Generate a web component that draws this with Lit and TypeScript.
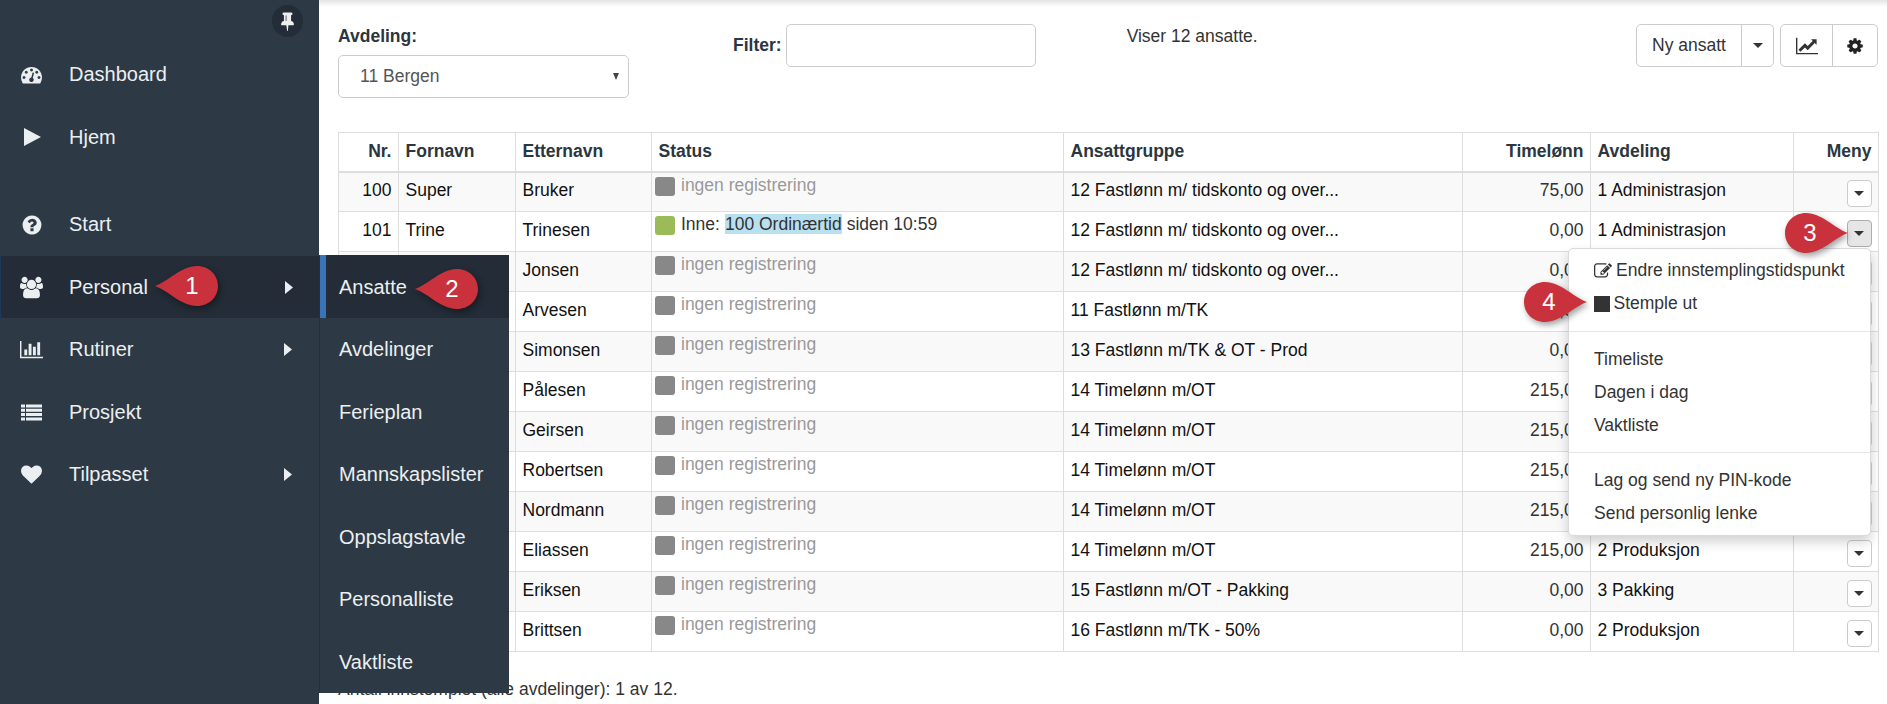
import { LitElement, html, css, svg } from "lit";
import { customElement } from "lit/decorators.js";

const icons: Record<string, [string, string]> = {
  dash: ["0 0 1792 1792", "M384 1152q0-53-37.5-90.5t-90.5-37.5-90.5 37.5-37.5 90.5 37.5 90.5 90.5 37.5 90.5-37.5 37.5-90.5zm192-448q0-53-37.5-90.5t-90.5-37.5-90.5 37.5-37.5 90.5 37.5 90.5 90.5 37.5 90.5-37.5 37.5-90.5zm428 481l101-382q6-26-7.5-48.5t-38.5-29.5-48 6.5-30 39.5l-101 382q-60 5-107 43.5t-63 98.5q-20 77 20 146t117 89 146-20 89-117q16-60-6-117t-72-91zm660-33q0-53-37.5-90.5t-90.5-37.5-90.5 37.5-37.5 90.5 37.5 90.5 90.5 37.5 90.5-37.5 37.5-90.5zm-640-640q0-53-37.5-90.5t-90.5-37.5-90.5 37.5-37.5 90.5 37.5 90.5 90.5 37.5 90.5-37.5 37.5-90.5zm448 192q0-53-37.5-90.5t-90.5-37.5-90.5 37.5-37.5 90.5 37.5 90.5 90.5 37.5 90.5-37.5 37.5-90.5zm320 448q0 261-141 483-19 29-54 29h-1402q-35 0-54-29-141-221-141-483 0-182 71-348t191-286 286-191 348-71 348 71 286 191 191 286 71 348z"],
  play: ["0 0 20 20", "M2 1 L19 10 L2 19 Z"],
  help: ["0 0 1792 1792", "M1024 1376v-192q0-14-9-23t-23-9h-192q-14 0-23 9t-9 23v192q0 14 9 23t23 9h192q14 0 23-9t9-23zm256-672q0-88-55.5-163t-138.5-116-170-41q-243 0-371 213-15 24 8 42l132 100q7 6 19 6 16 0 25-12 53-68 86-92 34-24 86-24 48 0 85.5 26t37.5 59q0 38-20 61t-68 45q-63 28-115.5 86.5t-52.5 125.5v36q0 14 9 23t23 9h192q14 0 23-9t9-23q0-19 21.5-49.5t54.5-49.5q32-18 49-28.5t46-35 44.5-48 28-60.5 12.5-81zm384 192q0 209-103 385.5t-279.5 279.5-385.5 103-385.5-103-279.5-279.5-103-385.5 103-385.5 279.5-279.5 385.5-103 385.5 103 279.5 279.5 103 385.5z"],
  users: ["0 0 1920 1792", "M593 896q-162 5-265 128h-134q-82 0-138-40.5t-56-118.5q0-353 124-353 6 0 43.5 21t97.5 42.5 119 21.5q67 0 133-23-5 37-5 66 0 139 81 256zm1071 637q0 120-73 189.5t-194 69.5h-874q-121 0-194-69.5t-73-189.5q0-53 3.5-103.5t14-109 26.5-108.5 43-97.5 62-81 85.5-53.5 111.5-20q10 0 43 21.5t73 48 107 48 135 21.5 135-21.5 107-48 73-48 43-21.5q61 0 111.5 20t85.5 53.5 62 81 43 97.5 26.5 108.5 14 109 3.5 103.5zm-1024-1277q0 106-75 181t-181 75-181-75-75-181 75-181 181-75 181 75 75 181zm704 384q0 159-112.5 271.5t-271.5 112.5-271.5-112.5-112.5-271.5 112.5-271.5 271.5-112.5 271.5 112.5 112.5 271.5zm576 225q0 78-56 118.5t-138 40.5h-134q-103-123-265-128 81-117 81-256 0-29-5-66 66 23 133 23 59 0 119-21.5t97.5-42.5 43.5-21q124 0 124 353zm-128-609q0 106-75 181t-181 75-181-75-75-181 75-181 181-75 181 75 75 181z"],
  bars: ["0 0 2048 1792", "M640 896v512h-256v-512h256zm384-512v1024h-256v-1024h256zm1024 1152v128h-2048v-1536h128v1408h1920zm-640-896v768h-256v-768h256zm384-384v1152h-256v-1152h256z"],
  list: ["0 0 21 16", "M0 0h4v3H0zM5 0h16v3H5zM0 4.3h4v3H0zM5 4.3h16v3H5zM0 8.6h4v3H0zM5 8.6h16v3H5zM0 13h4v3H0zM5 13h16v3H5z"],
  heart: ["0 0 1792 1792", "M896 1664q-26 0-44-18l-624-602q-10-8-27.5-26t-55.5-65.5-68-97.5-53.5-121-23.5-138q0-220 127-344t351-124q62 0 126.5 21.5t120 58 95.5 68.5 76 68q36-36 76-68t95.5-68.5 120-58 126.5-21.5q224 0 351 124t127 344q0 221-229 450l-623 600q-18 18-44 18z"],
  pin: ["0 0 1152 1792", "M480 864v-448q0-14-9-23t-23-9-23 9-9 23v448q0 14 9 23t23 9 23-9 9-23zm672 352q0 26-19 45t-45 19h-429l-51 483q-2 12-10.5 20.5t-20.5 8.5h-1q-27 0-32-27l-76-485h-404q-26 0-45-19t-19-45q0-123 78.5-221.5t177.5-98.5v-512q-52 0-90-38t-38-90 38-90 90-38h640q52 0 90 38t38 90-38 90-90 38v512q99 0 177.5 98.5t78.5 221.5z"],
  cog: ["0 0 1792 1792", "M1152 896q0-106-75-181t-181-75-181 75-75 181 75 181 181 75 181-75 75-181zm512-109v222q0 12-8 23t-20 13l-185 28q-19 54-39 91 35 50 107 138 10 12 10 25t-9 23q-27 37-99 108t-94 71q-12 0-26-9l-138-108q-44 23-91 38-16 136-29 186-7 28-36 28h-222q-14 0-24.5-8.5t-11.5-21.5l-28-184q-49-16-90-37l-141 107q-10 9-25 9-14 0-25-11-126-114-165-168-7-10-7-23 0-12 8-23 15-21 51-66.5t54-70.5q-27-50-41-99l-183-27q-13-2-21-12.5t-8-23.5v-222q0-12 8-23t19-13l186-28q14-46 39-92-40-57-107-138-10-12-10-24 0-10 9-23 26-36 98.5-107.5t94.5-71.5q13 0 26 10l138 107q44-23 91-38 16-136 29-186 7-28 36-28h222q14 0 24.5 8.5t11.5 21.5l28 184q49 16 90 37l142-107q9-9 24-9 13 0 25 10 129 119 165 170 7 8 7 22 0 12-8 23-15 21-51 66.5t-54 70.5q26 50 41 98l183 28q13 2 21 12.5t8 23.5z"],
  line: ["0 0 2048 1792", "M2048 1536v128h-2048v-1536h128v1408h1920zm-128-1248v435q0 21-19.5 29.5t-35.5-7.5l-121-121-633 633q-10 10-23 10t-23-10l-233-233-416 416-192-192 585-585q10-10 23-10t23 10l233 233 464-464-121-121q-16-16-7.5-35.5t29.5-19.5h435q14 0 23 9t9 23z"],
  edit: ["0 0 1792 1792", "M888 1184l116-116-152-152-116 116v56h96v96h56zm440-720q-16-16-33 1l-350 350q-17 17-1 33t33-1l350-350q17-17 1-33zm80 594v190q0 119-84.5 203.5t-203.5 84.5h-832q-119 0-203.5-84.5t-84.5-203.5v-832q0-119 84.5-203.5t203.5-84.5h832q63 0 117 25 15 7 18 23 3 17-9 29l-49 49q-14 14-32 8-23-6-45-6h-832q-66 0-113 47t-47 113v832q0 66 47 113t113 47h832q66 0 113-47t47-113v-126q0-13 9-22l64-64q15-15 35-7t20 29zm-96-738l288 288-672 672h-288v-288zm444 132l-92 92-288-288 92-92q28-28 68-28t68 28l152 152q28 28 28 68t-28 68z"],
  caretR: ["0 0 8 13", "M0 0 L8 6.5 L0 13 Z"],
};

const icon = (name: string, cls: string) => {
  const [vb, d] = icons[name];
  return html`<svg class=${cls} viewBox=${vb} aria-hidden="true">${svg`<path d=${d} fill="currentColor"></path>`}</svg>`;
};

type Row = [string, string, string, string, string, string, string];
const rows: Row[] = [
  ["100", "Super", "Bruker", "none", "12 Fastlønn m/ tidskonto og over...", "75,00", "1 Administrasjon"],
  ["101", "Trine", "Trinesen", "in", "12 Fastlønn m/ tidskonto og over...", "0,00", "1 Administrasjon"],
  ["102", "Jon", "Jonsen", "none", "12 Fastlønn m/ tidskonto og over...", "0,00", "1 Administrasjon"],
  ["103", "Arve", "Arvesen", "none", "11 Fastlønn m/TK", "0,00", "2 Produksjon"],
  ["104", "Simon", "Simonsen", "none", "13 Fastlønn m/TK & OT - Prod", "0,00", "2 Produksjon"],
  ["105", "Pål", "Pålesen", "none", "14 Timelønn m/OT", "215,00", "2 Produksjon"],
  ["106", "Geir", "Geirsen", "none", "14 Timelønn m/OT", "215,00", "2 Produksjon"],
  ["107", "Robert", "Robertsen", "none", "14 Timelønn m/OT", "215,00", "2 Produksjon"],
  ["108", "Ola", "Nordmann", "none", "14 Timelønn m/OT", "215,00", "2 Produksjon"],
  ["109", "Elias", "Eliassen", "none", "14 Timelønn m/OT", "215,00", "2 Produksjon"],
  ["110", "Erik", "Eriksen", "none", "15 Fastlønn m/OT - Pakking", "0,00", "3 Pakking"],
  ["111", "Britt", "Brittsen", "none", "16 Fastlønn m/TK - 50%", "0,00", "2 Produksjon"],
];

@customElement("call-out")
class CallOut extends LitElement {
  static properties = { n: {}, dir: {} };
  n = "";
  dir = "left";
  static styles = css`
    :host { display: block; position: absolute; width: 64px; height: 42px; }
    svg { position: absolute; inset: 0; overflow: visible; filter: drop-shadow(2px 3px 3px rgba(0, 0, 0, 0.38)); }
    span { position: absolute; top: 0; height: 42px; width: 42px; display: flex; align-items: center; justify-content: center;
      color: #fff; font: 24px "Liberation Sans", Arial, sans-serif; }
    .left span { left: 16px; }
    .right span { left: 4px; }
    .wrap { position: absolute; inset: 0; }
  `;
  render() {
    const d = this.dir === "left"
      ? "M0 21 C14 16 26 1 42 1 C54 1 63 10 63 21 C63 32 54 41 42 41 C26 41 14 26 0 21 Z"
      : "M63 21 C49 16 37 1 21 1 C9 1 0 10 0 21 C0 32 9 41 21 41 C37 41 49 26 63 21 Z";
    return html`<div class="wrap ${this.dir}">
      <svg width="64" height="42" viewBox="0 0 64 42"><path d=${d} fill="#c9323c"></path></svg>
      <span>${this.n}</span>
    </div>`;
  }
}

@customElement("app-root")
class AppRoot extends LitElement {
  static styles = css`
    :host { display: block; font-family: "Liberation Sans", Arial, sans-serif; font-size: 17.5px; color: #333; }
    .page { display: flex; height: 704px; overflow: hidden; position: relative; background: #fff; }

    .side { width: 319px; flex: none; background: #2d3944; color: #eceff1; font-size: 20px; position: relative; padding-top: 43px; box-sizing: border-box; }
    .pin { position: absolute; left: 272px; top: 5px; width: 31px; height: 32px; border-radius: 50%; background: #232c37; color: #eee; display: flex; align-items: center; justify-content: center; }
    .pin svg { width: 13px; height: 20px; margin-top: -1px; }
    .nav { height: 62.5px; display: flex; align-items: center; position: relative; padding: 1px 0 0 20px; box-sizing: border-box; }
    .nav .ic { width: 23px; height: 22px; margin-right: 26px; flex: none; display: flex; align-items: center; justify-content: center; }
    .nav .ic svg { flex: none; }
    .i19 { width: 20px; height: 20px; }
    .i21 { width: 21px; height: 21px; }
    .i22 { width: 22px; height: 22px; }
    .i23 { width: 23px; height: 23px; }
    .nav.gap { margin-top: 25px; }
    .nav.active { background: #232c37; border-left: 1px solid #1d3a5c; padding-left: 19px; }
    .nav .more { position: absolute; left: 284px; width: 8px; height: 13px; color: #eceff1; }

    .fly { position: absolute; left: 319px; top: 255px; width: 190px; height: 438px; background: #2d3944; color: #eceff1; font-size: 20px; border-left: 1px solid #25303a; box-sizing: border-box; z-index: 3; }
    .fly div { height: 62.5px; box-sizing: border-box; display: flex; align-items: center; padding: 2px 0 0 19px; }
    .fly .on { background: #232c37; border-left: 6px solid #3b73b9; padding-left: 13px; }

    .main { flex: 1; min-width: 0; padding: 24px 9px 0 19px; position: relative; }
    .main::before { content: ""; position: absolute; left: 0; right: 0; top: 0; height: 7px; background: linear-gradient(#e4e4e4, #fff); }

    .tools { display: flex; align-items: flex-start; height: 108px; }
    .dept { width: 291px; flex: none; }
    .dept label { display: block; font-weight: bold; color: #2b3640; line-height: 24px; margin-bottom: 7px; }
    .sel { height: 43px; border: 1px solid #ccc; border-radius: 5px; box-sizing: border-box; display: flex; align-items: center; padding-left: 21px; color: #555; position: relative; }
    .sel i { position: absolute; right: 9px; top: 17px; width: 0; height: 0; border-left: 3.5px solid transparent; border-right: 3.5px solid transparent; border-top: 7px solid #444; }
    .filter { display: flex; align-items: center; margin-left: 104px; }
    .filter label { font-weight: bold; color: #2b3640; margin-right: 4px; }
    .filter .inp { width: 250px; height: 43px; border: 1px solid #ccc; border-radius: 5px; box-sizing: border-box; }
    .count { margin-left: 91px; line-height: 24px; }
    .btns { margin-left: auto; display: flex; gap: 6px; }
    .grp { display: flex; height: 43px; border: 1px solid #ccc; border-radius: 5px; box-sizing: border-box; color: #333; }
    .grp > div { display: flex; align-items: center; justify-content: center; }
    .grp > div + div { border-left: 1px solid #ccc; }
    .ny { width: 104px; } .car { width: 31px; } .chart { width: 51px; } .gear { width: 44px; }
    .chart svg { width: 22px; height: 20px; color: #333; } .gear svg { width: 18px; height: 18px; color: #222; }
    .caret { width: 0; height: 0; border-left: 5px solid transparent; border-right: 5px solid transparent; border-top: 5px solid #333; }

    table { border-collapse: collapse; table-layout: fixed; width: 1540px; }
    th, td { border: 1px solid #ddd; padding: 0 6.5px; box-sizing: border-box; height: 40px; white-space: nowrap; overflow: hidden; }
    td { padding-bottom: 2px; }
    th { text-align: left; color: #2b3640; height: 39px; border-bottom-width: 2px; font-weight: bold; }
    td { color: #111; }
    tbody tr:nth-child(odd) td { background: #f9f9f9; }
    .r { text-align: right; }
    td.num { color: #333; }
    td.st { vertical-align: top; padding: 2px 0 0 3px; }
    .stw { display: flex; align-items: flex-start; color: #999; line-height: 20px; }
    .stw.in { color: #333; }
    .sw { width: 20px; height: 19px; border-radius: 3px; background: #888; margin: 2px 6px 0 0; flex: none; }
    .stw.in .sw { background: #9bbb59; }
    .hl { background: #b8e0ee; margin: 0 5px 0 5px; }
    td.menu { padding: 0 6.5px 0 0; text-align: right; }
    .dd { display: inline-flex; width: 25px; height: 27px; border: 1px solid #ccc; border-radius: 4px; box-sizing: border-box; background: #fff; align-items: center; justify-content: center; vertical-align: middle; margin-top: 3px; }
    .dd.open { background: #e6e6e6; border-color: #adadad; }
    .foot { margin-top: 27px; line-height: 20px; }

    .drop { position: absolute; left: 1568px; top: 248px; width: 303px; height: 288px; box-sizing: border-box; background: #fff; border: 1px solid #d9d9d9; border-radius: 5px; box-shadow: 0 6px 12px rgba(0, 0, 0, 0.18); z-index: 2; padding-top: 5px; color: #333; }
    .drop a { display: flex; align-items: center; height: 33px; padding-left: 25px; }
    .drop svg { width: 18px; height: 18px; margin-right: 4px; }
    .drop .stop { width: 16px; height: 16px; background: #333; margin-right: 3.5px; }
    .drop hr { border: 0; border-top: 1px solid #e5e5e5; margin: 0; }
    .drop .h1 { margin: 11px 0 10.5px; }
    .drop .h2 { margin: 10.5px 0 11px; }
    call-out { z-index: 5; }
    .c1 { left: 155px; top: 265px; } .c2 { left: 415px; top: 268px; } .c3 { left: 1785px; top: 212px; } .c4 { left: 1524px; top: 281px; }
  `;

  private renderRow(r: Row, i: number) {
    return html`<tr>
      <td class="r">${r[0]}</td><td>${r[1]}</td><td>${r[2]}</td>
      <td class="st">${r[3] === "in"
        ? html`<div class="stw in"><span class="sw"></span><span>Inne:</span><span class="hl">100 Ordinærtid</span><span>siden 10:59</span></div>`
        : html`<div class="stw"><span class="sw"></span><span>ingen registrering</span></div>`}</td>
      <td>${r[4]}</td><td class="r num">${r[5]}</td><td>${r[6]}</td>
      <td class="menu"><span class="dd ${i === 1 ? "open" : ""}"><span class="caret"></span></span></td>
    </tr>`;
  }

  render() {
    return html`<div class="page">
      <aside class="side">
        <div class="pin">${icon("pin", "")}</div>
        <div class="nav"><span class="ic">${icon("dash", "i21")}</span>Dashboard</div>
        <div class="nav"><span class="ic">${icon("play", "i19")}</span>Hjem</div>
        <div class="nav gap"><span class="ic">${icon("help", "i22")}</span>Start</div>
        <div class="nav active"><span class="ic">${icon("users", "i23")}</span>Personal${icon("caretR", "more")}</div>
        <div class="nav"><span class="ic">${icon("bars", "i23")}</span>Rutiner${icon("caretR", "more")}</div>
        <div class="nav"><span class="ic">${icon("list", "i21")}</span>Prosjekt</div>
        <div class="nav"><span class="ic">${icon("heart", "i21")}</span>Tilpasset${icon("caretR", "more")}</div>
      </aside>
      <nav class="fly">
        <div class="on">Ansatte</div><div>Avdelinger</div><div>Ferieplan</div><div>Mannskapslister</div><div>Oppslagstavle</div><div>Personalliste</div><div>Vaktliste</div>
      </nav>
      <main class="main">
        <div class="tools">
          <div class="dept"><label>Avdeling:</label><div class="sel">11 Bergen<i></i></div></div>
          <div class="filter"><label>Filter:</label><div class="inp"></div></div>
          <div class="count">Viser 12 ansatte.</div>
          <div class="btns">
            <div class="grp"><div class="ny">Ny ansatt</div><div class="car"><span class="caret"></span></div></div>
            <div class="grp"><div class="chart">${icon("line", "")}</div><div class="gear">${icon("cog", "")}</div></div>
          </div>
        </div>
        <table>
          <colgroup><col style="width:60px"><col style="width:117px"><col style="width:136px"><col style="width:412px"><col style="width:399px"><col style="width:128px"><col style="width:203px"><col style="width:85px"></colgroup>
          <thead><tr><th class="r">Nr.</th><th>Fornavn</th><th>Etternavn</th><th>Status</th><th>Ansattgruppe</th><th class="r">Timelønn</th><th>Avdeling</th><th class="r">Meny</th></tr></thead>
          <tbody>${rows.map((r, i) => this.renderRow(r, i))}</tbody>
        </table>
        <div class="foot">Antall innstemplet (alle avdelinger): 1 av 12.</div>
      </main>
      <div class="drop">
        <a>${icon("edit", "")}Endre innstemplingstidspunkt</a>
        <a><span class="stop"></span>Stemple ut</a>
        <hr class="h1">
        <a>Timeliste</a><a>Dagen i dag</a><a>Vaktliste</a>
        <hr class="h2">
        <a>Lag og send ny PIN-kode</a><a>Send personlig lenke</a>
      </div>
      <call-out class="c1" n="1" dir="left"></call-out>
      <call-out class="c2" n="2" dir="left"></call-out>
      <call-out class="c3" n="3" dir="right"></call-out>
      <call-out class="c4" n="4" dir="right"></call-out>
    </div>`;
  }
}
